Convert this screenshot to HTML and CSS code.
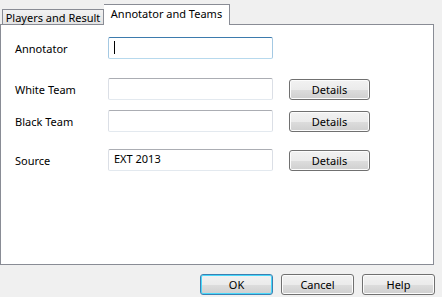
FILE: index.html
```html
<!DOCTYPE html>
<html lang="en">
<head>
<meta charset="UTF-8">
<title>Annotator and Teams</title>
<link rel="stylesheet" href="styles.css">
</head>
<body>
<div class="tabs">
  <div class="tab">Players and Result</div>
  <div class="tab active">Annotator and Teams</div>
</div>
<div class="panel">
  <div class="row first">
    <span class="label">Annotator</span>
    <div class="field focus"><span class="caret"></span></div>
  </div>
  <div class="row gap-big">
    <span class="label">White Team</span>
    <div class="field"></div>
    <button class="btn">Details</button>
  </div>
  <div class="row gap-small">
    <span class="label">Black Team</span>
    <div class="field"></div>
    <button class="btn">Details</button>
  </div>
  <div class="row gap-mid">
    <span class="label">Source</span>
    <div class="field">EXT 2013</div>
    <button class="btn">Details</button>
  </div>
</div>
<div class="footer">
  <button class="btn wide default">OK</button>
  <button class="btn wide">Cancel</button>
  <button class="btn wide">Help</button>
</div>
</body>
</html>
```

FILE: styles.css
```css
body {
  margin: 0;
  background: #f0f0f0;
  font-family: "Noto Sans", "Open Sans", sans-serif;
  font-size: 11px;
  color: #000;
  width: 442px;
  height: 297px;
  overflow: hidden;
}
.tabs {
  display: flex;
  align-items: flex-end;
  height: 24px;
  padding-left: 2px;
  position: relative;
  z-index: 1;
}
.tab {
  height: 15px;
  line-height: 15px;
  box-sizing: border-box;
  width: 102px;
  text-align: center;
  border: 1px solid #898c95;
  border-bottom: none;
  background: linear-gradient(#f2f2f2, #e3e3e3);
}
.tab.active {
  width: 126px;
  height: 21px;
  line-height: 18px;
  margin-bottom: -1px;
  background: #fff;
  border-left: none;
}
.panel {
  width: 434px;
  height: 241px;
  box-sizing: border-box;
  border: 1px solid #898c95;
  background: #fff;
  padding: 12px 0 0 13px;
}
.row {
  display: grid;
  grid-template-columns: 94px 165px 81px;
  align-items: center;
  height: 22px;
}
.row .btn {
  margin-left: 16px;
}
.gap-big { margin-top: 19px; }
.gap-small { margin-top: 10px; }
.gap-mid { margin-top: 17px; }
.label {
  padding-left: 1px;
}
.field {
  height: 22px;
  box-sizing: border-box;
  border: 1px solid #dbdfe6;
  border-top-color: #abadb3;
  border-bottom-color: #e3e9ef;
  border-radius: 2px;
  padding: 2px 5px;
  line-height: 14px;
}
.field.focus {
  border-color: #a4c9e3;
  border-top-color: #3d7bad;
  border-bottom-color: #b7d9ed;
}
.caret {
  display: inline-block;
  width: 1px;
  height: 13px;
  background: #000;
  margin-top: 1px;
}
.btn {
  font: inherit;
  color: #000;
  height: 21px;
  width: 81px;
  padding: 0;
  border: 1px solid #707070;
  border-radius: 3px;
  background: linear-gradient(#f2f2f2 0, #ebebeb 50%, #dddddd 51%, #cfcfcf 100%);
  box-shadow: inset 0 0 0 1px #fcfcfc;
}
.footer {
  display: flex;
  justify-content: flex-end;
  gap: 8px;
  padding: 9px 7px 0 0;
}
.btn.wide {
  width: 73px;
}
.btn.default {
  border-color: #3c7fb1;
  box-shadow: inset 0 0 0 1px #48d8fb;
}
```
